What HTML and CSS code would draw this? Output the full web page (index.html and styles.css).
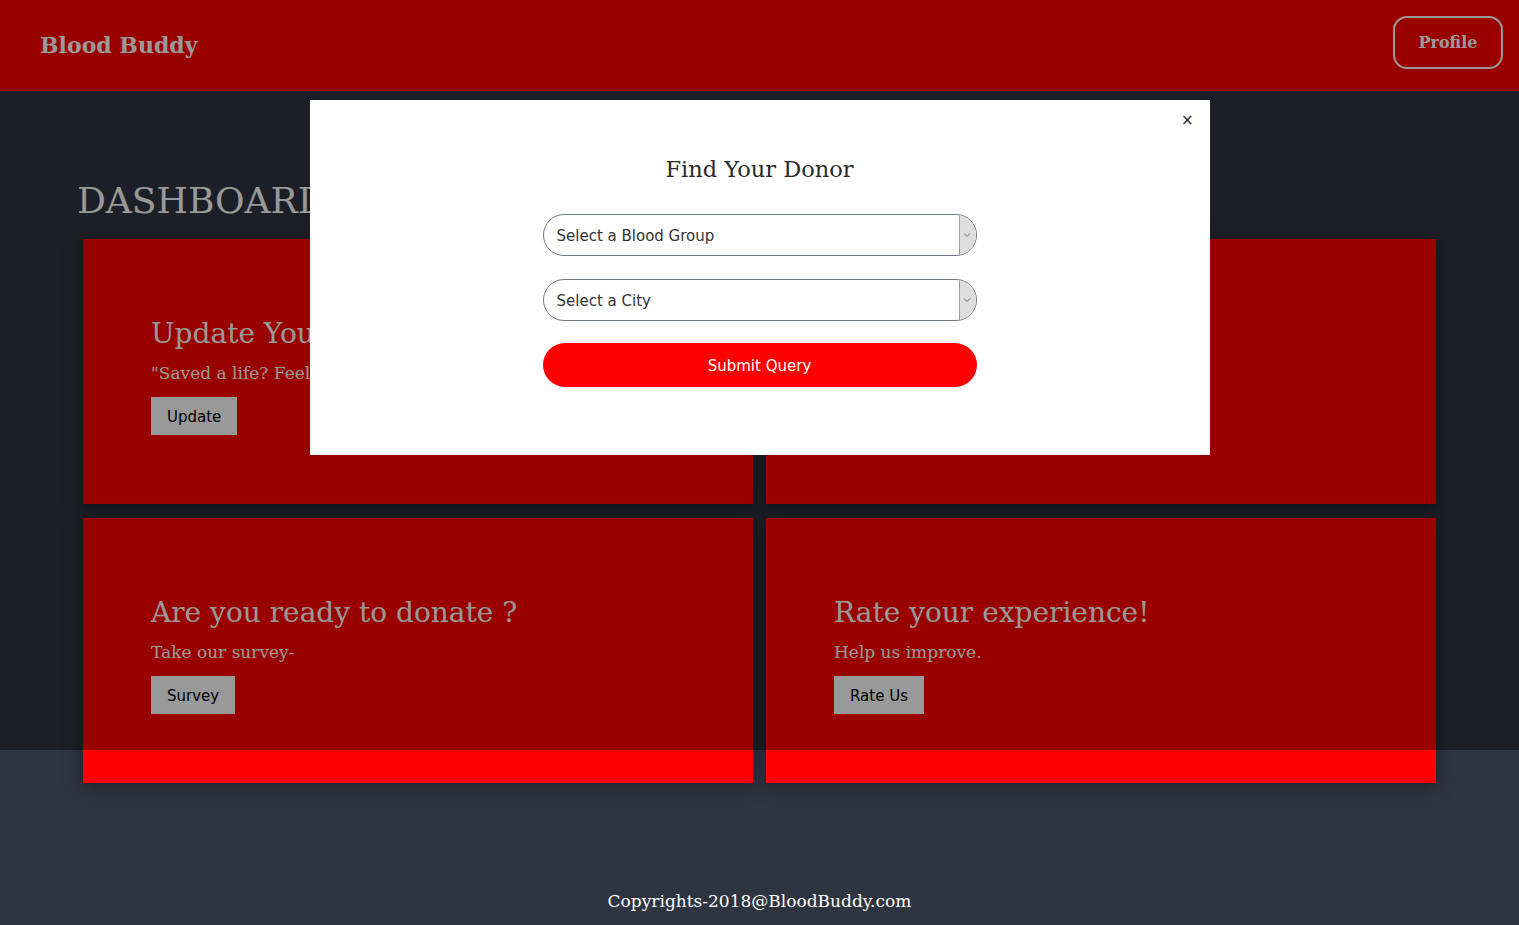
FILE: index.html
```html
<!DOCTYPE html>
<html lang="en">
<head>
<meta charset="utf-8">
<title>Blood Buddy - Dashboard</title>
<link rel="stylesheet" href="styles.css">
</head>
<body>
<header class="topbar">
  <div class="brand">Blood Buddy</div>
  <button class="profile-btn">Profile</button>
</header>

<main class="dashboard">
  <h1 class="dash-title">DASHBOARD</h1>
  <div class="card-grid">
    <section class="card">
      <h2 class="card-title">Update Your Status</h2>
      <p class="card-text">"Saved a life? Feel proud and update your status."</p>
      <button class="card-btn">Update</button>
    </section>
    <section class="card">
      <h2 class="card-title">Find a Donor</h2>
      <p class="card-text">Need blood? Search now.</p>
      <button class="card-btn">Search</button>
    </section>
    <section class="card">
      <h2 class="card-title">Are you ready to donate ?</h2>
      <p class="card-text">Take our survey-</p>
      <button class="card-btn">Survey</button>
    </section>
    <section class="card">
      <h2 class="card-title">Rate your experience!</h2>
      <p class="card-text">Help us improve.</p>
      <button class="card-btn">Rate Us</button>
    </section>
  </div>
</main>

<footer class="footer">Copyrights-2018@BloodBuddy.com</footer>

<div class="overlay">
  <div class="modal">
    <span class="close">&times;</span>
    <h3 class="modal-title">Find Your Donor</h3>
    <form class="donor-form">
      <div class="select">
        <span class="select-label">Select a Blood Group</span>
        <span class="select-arrow"><svg width="8" height="6" viewBox="0 0 8 6"><path d="M1 1.5 L4 4.5 L7 1.5" fill="none" stroke="#666" stroke-width="1"/></svg></span>
      </div>
      <div class="select">
        <span class="select-label">Select a City</span>
        <span class="select-arrow"><svg width="8" height="6" viewBox="0 0 8 6"><path d="M1 1.5 L4 4.5 L7 1.5" fill="none" stroke="#666" stroke-width="1"/></svg></span>
      </div>
      <button type="button" class="submit-btn">Submit Query</button>
    </form>
  </div>
</div>
</body>
</html>
```

FILE: styles.css
```css
* { box-sizing: border-box; }

body {
  margin: 0;
  background: #2f3441;
  font-family: "DejaVu Serif", "Liberation Serif", serif;
  color: #fff;
  position: relative;
  min-height: 925px;
}

.topbar {
  height: 91px;
  background: #ff0000;
  display: flex;
  align-items: center;
  justify-content: space-between;
  padding: 0 16px 0 40px;
}

.brand {
  font-weight: bold;
  font-size: 22px;
  color: #fff;
  margin-top: -2px;
}

.profile-btn {
  width: 110px;
  height: 53px;
  margin-top: -6px;
  border: 2px solid #fff;
  border-radius: 14px;
  background: transparent;
  color: #fff;
  font-family: "DejaVu Serif", serif;
  font-weight: bold;
  font-size: 16px;
}

.dashboard {
  padding: 88px 83px 0;
}

.dash-title {
  margin: 0 0 16px -6px;
  font-weight: normal;
  font-size: 36px;
  line-height: 44px;
  color: #fff;
}

.card-grid {
  display: grid;
  grid-template-columns: 670px 670px;
  grid-auto-rows: 265px;
  column-gap: 13px;
  row-gap: 14px;
}

.card {
  background: #ff0000;
  padding: 78px 68px 0;
  box-shadow: 0 4px 18px rgba(0, 0, 0, 0.35);
}

.card-title {
  margin: 0;
  font-weight: normal;
  font-size: 28px;
  line-height: 34px;
  color: #fff;
  white-space: nowrap;
}

.card-text {
  margin: 11px 0 13px;
  font-size: 17px;
  line-height: 22px;
  color: #fff;
}

.card-btn {
  display: block;
  height: 38px;
  padding: 2px 16px 0;
  border: none;
  background: #fff;
  color: #000;
  font-family: "DejaVu Sans", Verdana, sans-serif;
  font-size: 15px;
}

.footer {
  padding: 107px 0 13px;
  text-align: center;
  font-size: 17px;
  line-height: 22px;
  color: #fff;
}

.overlay {
  position: absolute;
  top: 0;
  left: 0;
  width: 100%;
  height: 750px;
  background: rgba(0, 0, 0, 0.4);
}

.modal {
  position: relative;
  width: 900px;
  height: 355px;
  margin: 100px auto 0;
  background: #fff;
  padding-top: 55px;
}

.close {
  position: absolute;
  top: 10px;
  right: 16px;
  font-family: "DejaVu Sans", sans-serif;
  font-size: 15px;
  line-height: 20px;
  color: #222;
}

.modal-title {
  margin: 0 0 31px;
  text-align: center;
  font-weight: normal;
  font-size: 22.5px;
  line-height: 28px;
  color: #2b2b2b;
}

.donor-form {
  width: 434px;
  margin: 0 auto;
  display: flex;
  flex-direction: column;
  gap: 23px;
}

.select {
  height: 42px;
  border: 1px solid #737b86;
  border-radius: 21px;
  overflow: hidden;
  display: flex;
  align-items: stretch;
  background: #fff;
}

.select-label {
  flex: 1;
  display: flex;
  align-items: center;
  padding: 2px 0 0 13px;
  font-family: "DejaVu Sans", Verdana, sans-serif;
  font-size: 15px;
  color: #333;
}

.select-arrow {
  width: 17px;
  background: #dedede;
  border-left: 1px solid #999;
  display: flex;
  align-items: center;
  justify-content: flex-start;
  padding-left: 3px;
}

.submit-btn {
  height: 44px;
  margin-top: -1px;
  padding-top: 2px;
  border: none;
  border-radius: 22px;
  background: #ff0000;
  color: #fff;
  font-family: "DejaVu Sans", Verdana, sans-serif;
  font-size: 15px;
}
```
